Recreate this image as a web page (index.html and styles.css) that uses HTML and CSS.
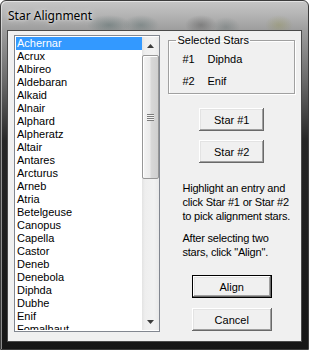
FILE: index.html
```html
<!DOCTYPE html>
<html lang="en">
<head>
    <meta charset="UTF-8">
    <title>Star Alignment</title>
    <link rel="stylesheet" href="styles.css">
</head>
<body>
    <div class="window">
        <div class="titlebar">
            <span class="title">Star Alignment</span>
        </div>

        <div class="client">
            <div class="listbox">
                <ul class="items">
                    <li class="selected">Achernar</li>
                    <li>Acrux</li>
                    <li>Albireo</li>
                    <li>Aldebaran</li>
                    <li>Alkaid</li>
                    <li>Alnair</li>
                    <li>Alphard</li>
                    <li>Alpheratz</li>
                    <li>Altair</li>
                    <li>Antares</li>
                    <li>Arcturus</li>
                    <li>Arneb</li>
                    <li>Atria</li>
                    <li>Betelgeuse</li>
                    <li>Canopus</li>
                    <li>Capella</li>
                    <li>Castor</li>
                    <li>Deneb</li>
                    <li>Denebola</li>
                    <li>Diphda</li>
                    <li>Dubhe</li>
                    <li>Enif</li>
                    <li>Fomalhaut</li>
                </ul>
                <div class="scrollbar">
                    <div class="sb-btn">
                        <svg width="7" height="4" viewBox="0 0 7 4"><polygon points="3.5,0 7,4 0,4" fill="#3c3c3c"/></svg>
                    </div>
                    <div class="sb-track">
                        <div class="sb-thumb">
                            <div class="grip"></div>
                        </div>
                    </div>
                    <div class="sb-btn">
                        <svg width="7" height="4" viewBox="0 0 7 4"><polygon points="0,0 7,0 3.5,4" fill="#3c3c3c"/></svg>
                    </div>
                </div>
            </div>

            <div class="side">
                <fieldset class="group">
                    <legend>Selected Stars</legend>
                    <div class="pick"><span class="num">#1</span><span>Diphda</span></div>
                    <div class="pick"><span class="num">#2</span><span>Enif</span></div>
                </fieldset>

                <button class="btn star-one">Star #1</button>
                <button class="btn star-two">Star #2</button>

                <p class="help">Highlight an entry and<br>click Star #1 or Star #2<br>to pick alignment stars.</p>
                <p class="help second">After selecting two<br>stars, click "Align".</p>

                <button class="btn wide default">Align</button>
                <button class="btn wide cancel">Cancel</button>
            </div>
        </div>
    </div>
</body>
</html>
```

FILE: styles.css
```css
body {
    margin: 0;
    width: 309px;
    height: 350px;
    overflow: hidden;
    background: #fff;
    font-family: "Liberation Sans", Arial, sans-serif;
    font-size: 11px;
    color: #000;
}

/* glass frame */
.window {
    box-sizing: border-box;
    width: 309px;
    height: 350px;
    border: 1px solid #3c3c3c;
    border-radius: 6px 6px 0 0;
    display: flex;
    flex-direction: column;
    background:
        radial-gradient(ellipse 22px 10px at 108px 24px, rgba(50, 80, 80, 0.35), transparent),
        radial-gradient(ellipse 18px 10px at 140px 24px, rgba(50, 80, 80, 0.3), transparent),
        radial-gradient(ellipse 16px 10px at 200px 24px, rgba(40, 40, 40, 0.3), transparent),
        radial-gradient(ellipse 14px 10px at 225px 26px, rgba(60, 80, 80, 0.25), transparent),
        radial-gradient(ellipse 14px 10px at 278px 24px, rgba(140, 140, 60, 0.3), transparent),
        linear-gradient(#c6c6c6, #b4b4b4 14px, #9c9c9c 30px, #6a6a6a 80px, #262626 140px, #161616);
    box-shadow: inset 1px 1px 0 rgba(255, 255, 255, 0.5);
}

.titlebar {
    height: 29px;
    flex: none;
    display: flex;
    align-items: center;
    padding-left: 7px;
}

.title {
    font-family: "Noto Sans", "Open Sans", sans-serif;
    font-size: 12px;
    color: #000;
    margin-top: -1px;
    text-shadow: 0 0 6px rgba(255, 255, 255, 0.8), 0 0 3px rgba(255, 255, 255, 0.6);
}

.client {
    box-sizing: border-box;
    height: 312px;
    margin: 0 6px 0 6px;
    border: 1px solid #4a4a4a;
    background: #f0f0f0;
    display: flex;
    padding: 4px 6px 0 6px;
}

/* list */
.listbox {
    box-sizing: border-box;
    width: 147px;
    height: 297px;
    border: 1px solid #828790;
    background: #fff;
    padding: 1px 0 1px 1px;
    display: flex;
}

.items {
    list-style: none;
    margin: 0;
    padding: 0;
    flex: 1;
    overflow: hidden;
}

.items li {
    height: 13px;
    line-height: 13px;
    padding-left: 1px;
    white-space: nowrap;
}

.items li.selected {
    background: #3399ff;
    color: #fff;
}

.scrollbar {
    width: 17px;
    display: flex;
    flex-direction: column;
    background: linear-gradient(to right, #e3e3e3, #eeeeee 3px, #f2f2f2 12px, #e9e9e9);
}

.sb-btn {
    height: 17px;
    flex: none;
    display: flex;
    align-items: center;
    justify-content: center;
}

.sb-track {
    flex: 1;
    padding-top: 1px;
}

.sb-thumb {
    box-sizing: border-box;
    height: 124px;
    border: 1px solid #979797;
    border-radius: 2px;
    background: linear-gradient(to right, #f4f4f4, #ebebeb 45%, #d8d8d8 55%, #cfcfcf);
    box-shadow: inset 1px 1px 0 #fff;
    display: flex;
    align-items: center;
    justify-content: center;
}

.grip {
    width: 7px;
    height: 7px;
    background: repeating-linear-gradient(#7c7c7c 0, #7c7c7c 1px, #f4f4f4 1px, #f4f4f4 2px);
}

/* right column */
.side {
    width: 127px;
    margin-left: 8px;
    display: flex;
    flex-direction: column;
    align-items: center;
}

.group {
    align-self: stretch;
    margin: -1px 0 0 0;
    padding: 2px 0 1px 0;
    border: 1px solid #a0a0a0;
    box-shadow: 1px 1px 0 #fff, inset 1px 1px 0 #fff;
    min-width: 0;
}

.group legend {
    margin-left: 7px;
    padding: 0 1px;
    line-height: 12px;
}

.pick {
    height: 22px;
    display: flex;
    align-items: center;
    padding-left: 13px;
}

.pick .num {
    width: 25px;
}

.btn {
    box-sizing: border-box;
    width: 65px;
    height: 23px;
    padding: 0;
    border: none;
    background: #f0f0f0;
    font-family: "Liberation Sans", Arial, sans-serif;
    font-size: 11px;
    color: #000;
    box-shadow:
        inset -1px -1px 0 #696969,
        inset 1px 1px 0 #ffffff,
        inset -2px -2px 0 #a0a0a0,
        inset 2px 2px 0 #e3e3e3;
}

.star-one {
    margin-top: 14px;
}

.star-two {
    margin-top: 9px;
}

.btn.wide {
    width: 80px;
}

.btn.default {
    margin-top: 16px;
    border: 1px solid #000;
}

.btn.cancel {
    margin-top: 10px;
}

.help {
    align-self: stretch;
    margin: 18px 0 0 0;
    padding-left: 14px;
    line-height: 14px;
    letter-spacing: -0.2px;
    white-space: nowrap;
}

.help.second {
    margin-top: 8px;
}
```
